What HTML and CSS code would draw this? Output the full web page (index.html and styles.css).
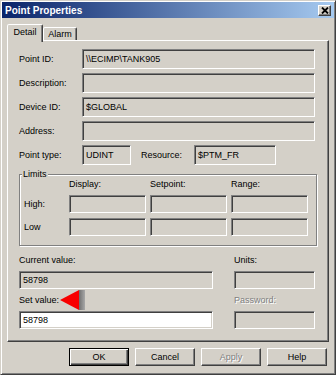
FILE: index.html
```html
<!DOCTYPE html>
<html lang="en">
<head>
  <meta charset="UTF-8">
  <title>Point Properties</title>
  <link rel="stylesheet" href="styles.css">
</head>
<body>

  <div class="window">
    <div class="titlebar">
      <span class="title">Point Properties</span>
      <span class="close-btn">
        <svg width="8" height="7" viewBox="0 0 8 7"><path d="M1 0.5 L7 6.5 M7 0.5 L1 6.5" stroke="#000" stroke-width="1.8"/></svg>
      </span>
    </div>

    <div class="tabs">
      <div class="tab active">Detail</div>
      <div class="tab">Alarm</div>
    </div>

    <div class="panel">
      <div class="rows">
        <label>Point ID:</label>
        <div class="field">\\ECIMP\TANK905</div>
        <label>Description:</label>
        <div class="field"></div>
        <label>Device ID:</label>
        <div class="field">$GLOBAL</div>
        <label>Address:</label>
        <div class="field"></div>
        <label>Point type:</label>
        <div class="inline">
          <div class="field type-field">UDINT</div>
          <label class="res-label">Resource:</label>
          <div class="field res-field">$PTM_FR</div>
        </div>
      </div>

      <div class="group">
        <span class="legend">Limits</span>
        <div class="limits">
          <span></span>
          <label>Display:</label>
          <label>Setpoint:</label>
          <label>Range:</label>
          <label>High:</label>
          <div class="field"></div>
          <div class="field"></div>
          <div class="field"></div>
          <label>Low</label>
          <div class="field"></div>
          <div class="field"></div>
          <div class="field"></div>
        </div>
      </div>

      <div class="values">
        <label>Current value:</label>
        <label>Units:</label>
        <div class="field">58798</div>
        <div class="field"></div>
        <label class="set-label">Set value:
          <span class="marker">
            <span class="arrow"></span>
            <span class="bar"></span>
          </span>
        </label>
        <label class="disabled">Password:</label>
        <div class="field edit">58798</div>
        <div class="field"></div>
      </div>
    </div>

    <div class="buttons">
      <button class="btn default">OK</button>
      <button class="btn">Cancel</button>
      <button class="btn disabled">Apply</button>
      <button class="btn">Help</button>
    </div>
  </div>

</body>
</html>
```

FILE: styles.css
```css
* {
  box-sizing: border-box;
  margin: 0;
  padding: 0;
}

body {
  font-family: "Liberation Sans", Arial, sans-serif;
  font-size: 9px;
  color: #000;
  background: #fff;
}

label {
  display: block;
  line-height: 12px;
}

.window {
  width: 336px;
  height: 375px;
  background: #d4d0c8;
  border: 1px solid;
  border-color: #d4d0c8 #404040 #404040 #d4d0c8;
  box-shadow: inset 1px 1px #fff, inset -1px -1px #808080;
  padding: 1px;
}

.titlebar {
  height: 16px;
  display: flex;
  align-items: center;
  justify-content: space-between;
  padding: 0 3px 0 3px;
  background: linear-gradient(to right, #0a246a, #a6caf0);
}

.title {
  color: #fff;
  font-weight: bold;
  font-size: 10px;
}

.close-btn {
  width: 13px;
  height: 11px;
  display: flex;
  align-items: center;
  justify-content: center;
  background: #d4d0c8;
  border: 1px solid;
  border-color: #fff #404040 #404040 #fff;
  box-shadow: inset -1px -1px #808080;
}

.tabs {
  display: flex;
  align-items: flex-end;
  height: 16px;
  margin-top: 6px;
  padding-left: 5px;
  position: relative;
  z-index: 1;
}

.tab {
  height: 13px;
  width: 34px;
  text-align: center;
  line-height: 12px;
  background: #d4d0c8;
  border: 1px solid;
  border-bottom: none;
  border-color: #fff #404040 transparent #fff;
  border-radius: 2px 2px 0 0;
  box-shadow: inset -1px 0 #808080;
}

.tab.active {
  width: 36px;
  height: 18px;
  margin-bottom: -2px;
  line-height: 14px;
}

.panel {
  height: 302px;
  margin: 0 5px;
  padding: 8px 11px 0;
  border: 1px solid;
  border-color: #fff #404040 #404040 #fff;
  box-shadow: inset -1px -1px #808080;
}

.field {
  height: 20px;
  padding-left: 3px;
  line-height: 18px;
  white-space: nowrap;
  border: 1px solid;
  border-color: #808080 #fff #fff #808080;
  box-shadow: inset 1px 1px #404040, inset -1px -1px #d4d0c8;
}

.field.edit {
  background: #fff;
}

.rows {
  display: grid;
  grid-template-columns: 63px 233px;
  grid-auto-rows: 20px;
  row-gap: 4px;
  align-items: center;
}

.inline {
  display: flex;
  align-items: center;
}

.type-field {
  width: 49px;
}

.res-label {
  width: 53px;
  margin-left: 10px;
}

.res-field {
  width: 82px;
}

.group {
  position: relative;
  height: 72px;
  margin-top: 9px;
  padding: 2px 0 0 4px;
  border: 1px solid #808080;
  box-shadow: inset 1px 1px #fff, 1px 1px #fff;
}

.legend {
  position: absolute;
  top: -7px;
  left: 2px;
  padding: 0 1px;
  background: #d4d0c8;
  line-height: 12px;
}

.limits {
  display: grid;
  grid-template-columns: 41px 77px 77px 77px;
  grid-template-rows: 13px 18px 18px;
  column-gap: 4px;
  row-gap: 5px;
  align-items: center;
}

.limits .field {
  height: 18px;
}

.values {
  display: grid;
  grid-template-columns: 194px 81px;
  grid-template-rows: 12px 18px 12px 18px;
  column-gap: 21px;
  row-gap: 5px;
  margin-top: 8px;
}

.values .field {
  height: 18px;
  line-height: 16px;
}

.set-label {
  position: relative;
}

.marker {
  position: absolute;
  left: 41px;
  top: -4px;
  display: flex;
}

.arrow {
  width: 0;
  height: 0;
  border-top: 10px solid transparent;
  border-bottom: 10px solid transparent;
  border-right: 19px solid #f80000;
}

.bar {
  width: 6px;
  height: 20px;
  background: linear-gradient(to right, #707070, #a8a8a8);
}

.disabled {
  color: #808080;
  text-shadow: 1px 1px #fff;
}

.buttons {
  display: flex;
  justify-content: flex-end;
  gap: 6px;
  margin: 6px 7px 0 0;
}

.btn {
  width: 60px;
  height: 18px;
  font-family: "Liberation Sans", Arial, sans-serif;
  font-size: 9px;
  background: #d4d0c8;
  border: 1px solid;
  border-color: #fff #404040 #404040 #fff;
  box-shadow: inset -1px -1px #808080;
}

.btn.default {
  border-color: #000;
  box-shadow: inset 1px 1px #fff, inset -1px -1px #404040, inset -2px -2px #808080;
}
```
